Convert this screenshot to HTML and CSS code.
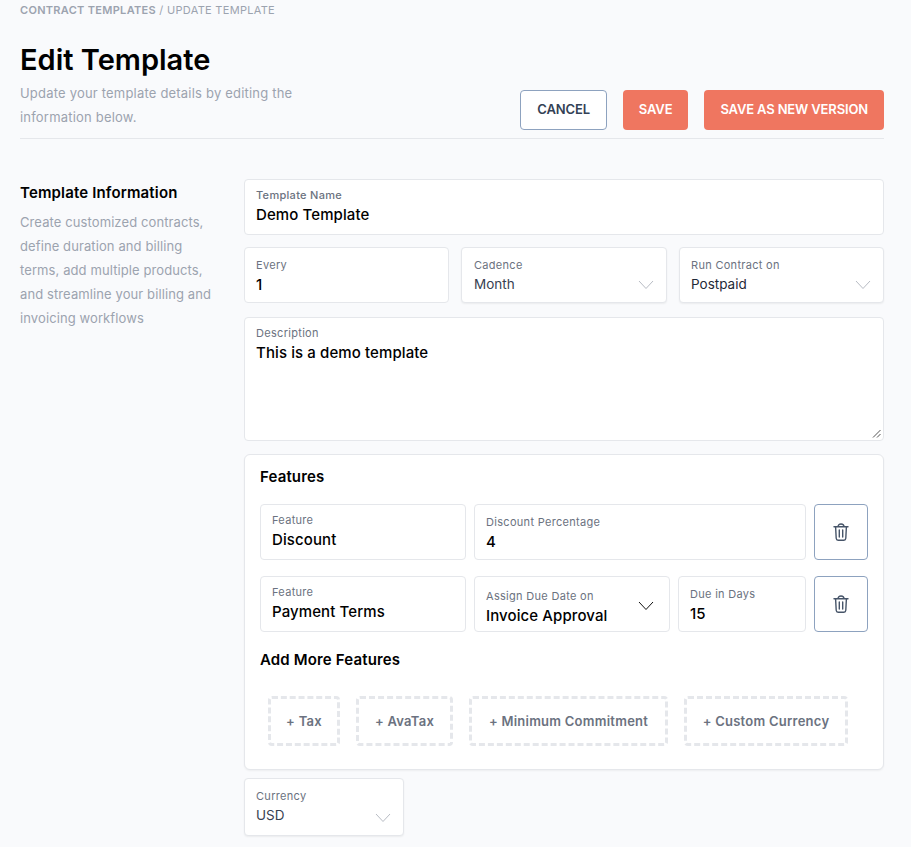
FILE: index.html
```html
<!DOCTYPE html>
<html lang="en">
<head>
<meta charset="utf-8">
<title>Edit Template</title>
<link rel="stylesheet" href="styles.css">
</head>
<body>
<svg class="sprite" width="0" height="0" aria-hidden="true">
  <symbol id="chev" viewBox="0 0 16 10"><path d="M1 1 8 8.5 15 1" fill="none" stroke="currentColor" stroke-width="1"/></symbol>
  <symbol id="trash" viewBox="0 0 16 18"><path d="M1 3.8h14M5 3.8C5 2 6.2 1 8 1s3 1 3 2.8M2.6 3.8l.6 11.4c.1 1.2.8 2 1.9 2h5.8c1.1 0 1.8-.8 1.9-2l.6-11.4M6.3 7v7M9.7 7v7" fill="none" stroke="currentColor" stroke-width="1.4" stroke-linecap="round" stroke-linejoin="round"/></symbol>
</svg>
<main class="page">
  <div class="crumbs"><b>CONTRACT TEMPLATES</b> / UPDATE TEMPLATE</div>
  <h1 class="title">Edit Template</h1>
  <header class="head">
    <p class="sub">Update your template details by editing the information below.</p>
    <div class="actions">
      <button class="btn btn-outline">CANCEL</button>
      <button class="btn btn-fill">SAVE</button>
      <button class="btn btn-fill">SAVE AS NEW VERSION</button>
    </div>
  </header>
  <section class="layout">
    <aside class="side">
      <h2 class="side-title">Template Information</h2>
      <p class="side-text">Create customized contracts, define duration and billing terms, add multiple products, and streamline your billing and invoicing workflows</p>
    </aside>
    <div class="form">
      <div class="field field-name"><span class="label strong">Template Name</span><span class="value strong">Demo Template</span></div>
      <div class="three">
        <div class="field"><span class="label">Every</span><span class="value strong">1</span></div>
        <div class="field raised inset"><span class="label">Cadence</span><span class="value">Month</span><svg class="chev"><use href="#chev"/></svg></div>
        <div class="field raised"><span class="label">Run Contract on</span><span class="value dark">Postpaid</span><svg class="chev"><use href="#chev"/></svg></div>
      </div>
      <div class="field desc"><span class="label">Description</span><span class="value strong">This is a demo template</span>
        <svg class="grip" viewBox="0 0 9 9"><path d="M1 8.5 8.5 1M5 8.5 8.5 5" stroke="#555" stroke-width="1"/></svg>
      </div>
      <div class="card">
        <h3 class="card-title">Features</h3>
        <div class="row">
          <div class="field feat"><span class="label">Feature</span><span class="value big">Discount</span></div>
          <div class="field fill low"><span class="label">Discount Percentage</span><span class="value big">4</span></div>
          <button class="icon-btn"><svg class="trash"><use href="#trash"/></svg></button>
        </div>
        <div class="row">
          <div class="field feat"><span class="label">Feature</span><span class="value big">Payment Terms</span></div>
          <div class="field assign"><span class="label">Assign Due Date on</span><span class="value big">Invoice Approval</span><svg class="chev chev-dark"><use href="#chev"/></svg></div>
          <div class="field fill low"><span class="label">Due in Days</span><span class="value big">15</span></div>
          <button class="icon-btn"><svg class="trash"><use href="#trash"/></svg></button>
        </div>
        <h3 class="card-title more">Add More Features</h3>
        <div class="chips">
          <button class="chip">+ Tax</button>
          <button class="chip">+ AvaTax</button>
          <button class="chip">+ Minimum Commitment</button>
          <button class="chip">+ Custom Currency</button>
        </div>
      </div>
      <div class="field raised currency"><span class="label">Currency</span><span class="value">USD</span><svg class="chev"><use href="#chev"/></svg></div>
    </div>
  </section>
</main>
</body>
</html>
```
FILE: styles.css
```css
* { box-sizing: border-box; }
html, body { margin: 0; height: 847px; overflow: hidden; }
body { background: #f9fafc; font-family: Inter, "Noto Sans", sans-serif; color: #000; }
.sprite { position: absolute; }
.page { width: 911px; padding: 3px 27px 0 20px; }
.crumbs { font-size: 11px; line-height: 14px; color: #9ca3af; letter-spacing: 0.3px; }
.crumbs b { font-weight: 600; }
.title { margin: 22px 0 0; font-size: 29px; line-height: 42px; font-weight: 600; }
.head { display: flex; justify-content: space-between; align-items: flex-end; padding-bottom: 8px; border-bottom: 1px solid #e5e7eb; height: 58px; }
.sub { margin: 0 0 1px; width: 290px; font-size: 13px; line-height: 24px; color: #9ca3af; letter-spacing: 0.2px; }
.actions { display: flex; gap: 16px; }
.btn { height: 40px; padding: 0 16px 2px; border-radius: 4px; font: 600 13px Inter, sans-serif; letter-spacing: -0.15px; cursor: pointer; }
.btn-outline { background: #fff; border: 1px solid #8da2bf; color: #334155; }
.btn-fill { background: #ef7660; border: 0; color: #fff; }
.layout { display: flex; margin-top: 40px; }
.side { width: 224px; flex: none; }
.side-title { margin: 3px 0 0; font-size: 15px; line-height: 22px; font-weight: 600; letter-spacing: 0.15px; }
.side-text { margin: 6px 0 0; width: 196px; font-size: 13px; line-height: 24px; color: #9ca3af; letter-spacing: 0.1px; }
.form { flex: 1; min-width: 0; }
.field { position: relative; display: flex; flex-direction: column; height: 56px; padding: 10px 11px 0; background: #fff; border: 1px solid #e5e7eb; border-radius: 4px; }
.field-name { padding-top: 8px; }
.inset { padding-left: 12px; }
.raised { box-shadow: 0 1px 2px rgba(0,0,0,.06); }
.label { font-size: 11px; line-height: 14px; color: #6b7280; letter-spacing: 0.3px; }
.label.strong { font-weight: 500; }
.value { margin-top: 3px; font-size: 13.5px; line-height: 18px; color: #374151; }
.value.strong { margin-top: 4px; color: #000; font-size: 15px; font-weight: 500; letter-spacing: 0.1px; }
.value.dark { color: #1f2937; }
.value.big { margin-top: 4px; font-size: 15px; font-weight: 500; color: #000; letter-spacing: 0.1px; }
.chev { position: absolute; right: 12px; bottom: 12px; width: 16px; height: 10px; color: #b8bcc4; }
.chev-dark { right: 15px; bottom: 20px; color: #111; }
.three { display: grid; grid-template-columns: 205px 206px 205px; gap: 12px; margin-top: 12px; }
.desc { height: 124px; margin-top: 14px; padding-top: 8px; }
.grip { position: absolute; right: 2px; bottom: 2px; width: 9px; height: 9px; }
.card { margin-top: 13px; height: 316px; padding: 12px 15px; background: #fff; border: 1px solid #e5e7eb; border-radius: 6px; box-shadow: 0 1px 2px rgba(0,0,0,.05); }
.card-title { margin: 0; font-size: 15px; line-height: 20px; font-weight: 600; letter-spacing: 0.15px; }
.row { display: flex; gap: 8px; margin-top: 18px; }
.card-title + .row { margin-top: 17px; }
.row + .row { margin-top: 16px; }
.feat { width: 206px; flex: none; padding-top: 8px; }
.fill { flex: 1; min-width: 0; }
.low { padding-top: 10px; }
.assign { width: 196px; flex: none; padding-top: 12px; }
.icon-btn { width: 54px; height: 56px; flex: none; display: flex; align-items: center; justify-content: center; background: #fff; border: 1px solid #8da2bf; border-radius: 4px; cursor: pointer; }
.trash { width: 16px; height: 18px; color: #475569; }
.more { margin-top: 18px; }
.chips { display: grid; grid-template-columns: 72px 97px 199px 164px; gap: 16px; margin-top: 26px; padding-left: 8px; }
.chip { height: 50px; padding: 0; background: #fff; border: 3px dashed #e5e7eb; border-radius: 4px; font: 600 13px Inter, sans-serif; letter-spacing: 0.25px; color: #6b7280; cursor: pointer; }
.currency { width: 160px; height: 58px; margin-top: 8px; }
```
